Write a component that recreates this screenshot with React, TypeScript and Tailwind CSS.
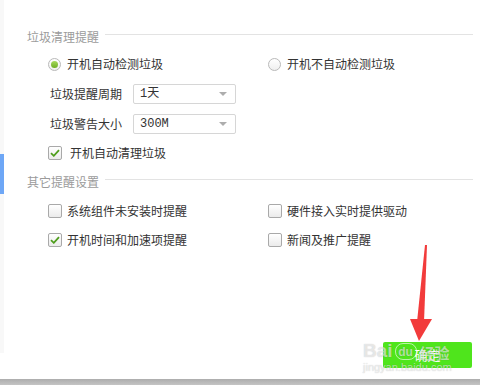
import React from 'react';

const font = { fontFamily: '"Noto Sans CJK SC", "Liberation Sans", sans-serif' };

const Radio: React.FC<{ checked?: boolean; label: string }> = ({ checked, label }) => (
    <div className="flex items-center h-4">
        <span className="w-[13px] h-[13px] rounded-full border border-[#b9b9b9] bg-gradient-to-b from-white to-[#efefef] flex items-center justify-center">
            {checked && <span className="w-[7px] h-[7px] rounded-full bg-gradient-to-b from-[#a6d95a] to-[#6fae22]" />}
        </span>
        <span className="ml-[6px] text-[12px] leading-4 text-[#333]">{label}</span>
    </div>
);

const Check: React.FC<{ checked?: boolean; label: string; gap?: string }> = ({ checked, label, gap = 'ml-[5px]' }) => (
    <div className="flex items-center h-4">
        <span className="w-[14px] h-[14px] rounded-[2px] border border-[#a9a9a9] bg-gradient-to-b from-white to-[#ebebeb] flex items-center justify-center">
            {checked && (
                <svg width="10" height="8" viewBox="0 0 10 8">
                    <path d="M1 4.2 L3.8 6.8 L9 1.2" fill="none" stroke="#4f9e1e" strokeWidth="1.8" />
                </svg>
            )}
        </span>
        <span className={`${gap} text-[12px] leading-4 text-[#333]`}>{label}</span>
    </div>
);

const SelectBox: React.FC<{ label: string; value: string; top: string }> = ({ label, value, top }) => (
    <div className={`flex items-center ${top}`}>
        <span className="ml-[2px] w-[83px] text-[12px] leading-4 text-[#333]">{label}</span>
        <div className="w-[103px] h-[20px] border border-[#d6d6d6] rounded-[2px] bg-white flex items-center justify-between pl-[6px] pr-[8px]">
            <span className="text-[12px] text-[#333]" style={{ fontFamily: '"Liberation Mono", "Noto Sans CJK SC", monospace' }}>{value}</span>
            <span className="w-0 h-0 border-l-[4px] border-r-[4px] border-t-[4px] border-l-transparent border-r-transparent border-t-[#adadad]" />
        </div>
    </div>
);

const SectionTitle: React.FC<{ text: string; top: string }> = ({ text, top }) => (
    <div className={`flex items-center h-4 ${top}`}>
        <span className="text-[12px] leading-4 text-[#9b9b9b]">{text}</span>
        <span className="flex-1 h-px bg-[#e3e3e3] ml-[6px] mb-[6px]" />
    </div>
);

export default function App() {
    return (
        <div className="w-[480px] h-[385px] relative bg-white flex flex-col overflow-hidden" style={font}>
            <div className="flex flex-1">
                <div className="w-[4px] h-[353px] bg-[#f8f8f8] flex flex-col">
                    <div className="mt-[154px] h-[40px] bg-[#6ea7f6]" />
                </div>
                <div className="flex-1 flex flex-col pl-[23px] pr-[7px] pt-[29px] pb-[11px]">
                    <SectionTitle text="垃圾清理提醒" top="" />
                    <div className="pl-[21px]">
                        <div className="flex mt-[11px]">
                            <div className="w-[220px]"><Radio checked label="开机自动检测垃圾" /></div>
                            <Radio label="开机不自动检测垃圾" />
                        </div>
                        <SelectBox label="垃圾提醒周期" value="1天" top="mt-[12px]" />
                        <SelectBox label="垃圾警告大小" value="300M" top="mt-[10px]" />
                        <div className="mt-[11px]"><Check checked label="开机自动清理垃圾" gap="ml-[8px]" /></div>
                    </div>
                    <SectionTitle text="其它提醒设置" top="mt-[13px]" />
                    <div className="pl-[21px]">
                        <div className="flex mt-[13px]">
                            <div className="w-[220px]"><Check label="系统组件未安装时提醒" /></div>
                            <Check label="硬件接入实时提供驱动" />
                        </div>
                        <div className="flex mt-[13px]">
                            <div className="w-[220px]"><Check checked label="开机时间和加速项提醒" /></div>
                            <Check label="新闻及推广提醒" />
                        </div>
                    </div>
                    <div className="mt-auto flex justify-end pr-px">
                        <button className="w-[89px] h-[26px] rounded-[2px] bg-[#4fe51c] text-white text-[13px] leading-[26px]">确定</button>
                    </div>
                </div>
            </div>
            <div className="h-[6px] bg-gradient-to-b from-[#adadad] to-[#c4c4c4]" />

            {/* red annotation arrow */}
            <svg className="absolute left-[400px] top-[240px]" width="40" height="105" viewBox="400 240 40 105">
                <polygon points="425,245 427,245 424,322 417,322" fill="#f23b3b" />
                <polygon points="410,319 432,319 419,341" fill="#f23b3b" />
            </svg>

            {/* baidu watermark */}
            <div className="absolute left-[363px] top-[341px] flex flex-col items-start pointer-events-none text-white/60 [text-shadow:0_0_1px_rgba(0,0,0,0.25)]">
                <div className="flex items-end leading-none">
                    <span className="text-[19px] font-bold" style={{ fontFamily: '"Liberation Sans", sans-serif' }}>Bai</span>
                    <span className="ml-[2px] w-[22px] h-[17px] rounded-[8px] border border-white/60 text-[12px] font-bold flex items-center justify-center" style={{ fontFamily: '"Liberation Sans", sans-serif' }}>du</span>
                    <span className="ml-[3px] text-[15px] font-bold">经验</span>
                </div>
                <span className="text-[11px] leading-[12px] mt-[1px]" style={{ fontFamily: '"Liberation Sans", sans-serif' }}>jingyan.baidu.com</span>
            </div>
        </div>
    );
}
